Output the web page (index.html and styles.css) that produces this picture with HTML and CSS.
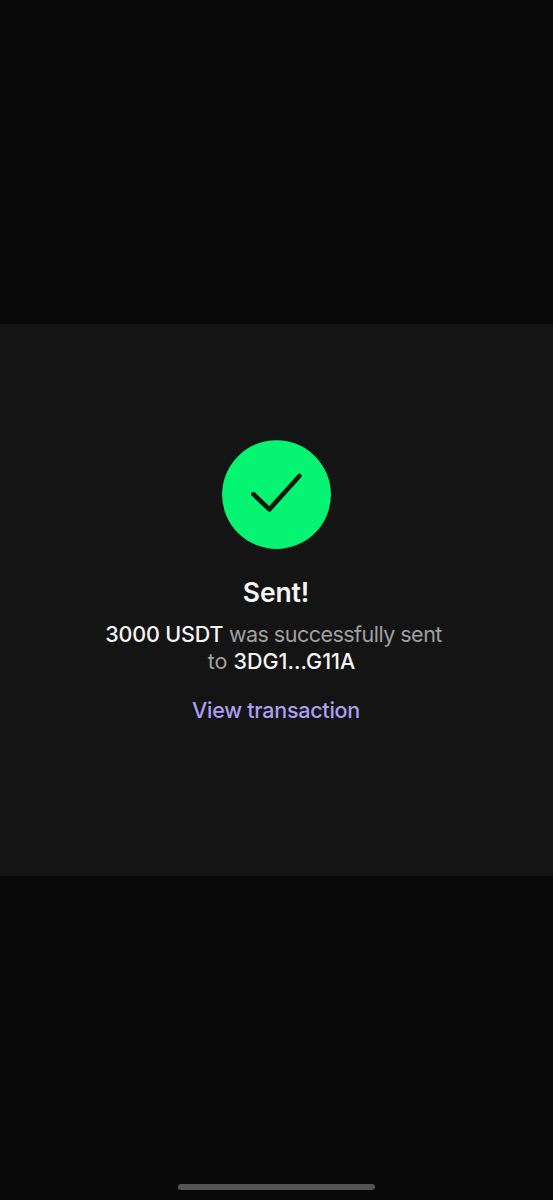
FILE: index.html
```html
<!DOCTYPE html>
<html lang="en">
<head>
<meta charset="utf-8">
<title>Sent</title>
<link rel="stylesheet" href="styles.css">
</head>
<body>
<main class="screen">
  <section class="panel">
    <svg class="success" viewBox="0 0 110 110" aria-hidden="true">
      <circle cx="54.5" cy="54.6" r="54.4" fill="#05f472"/>
      <path d="M31.4 54.2 L47.4 69.4 L77.4 36" fill="none" stroke="#07180c" stroke-width="4.6" stroke-linecap="round" stroke-linejoin="round"/>
    </svg>
    <h1 class="title">Sent!</h1>
    <p class="message"><span class="line line-first"><b>3000 USDT</b> was successfully sent</span><span class="line line-second">to <b>3DG1...G11A</b></span></p>
    <a class="link">View transaction</a>
  </section>
  <div class="home-indicator"></div>
</main>
</body>
</html>
```
FILE: styles.css
```css
* { box-sizing: border-box; margin: 0; }
body { background: #090909; font-family: Inter, "Liberation Sans", sans-serif; }
.screen { height: 1200px; padding-top: 324px; display: flex; flex-direction: column; align-items: center; overflow: hidden; }
.panel { width: 100%; height: 552px; padding-top: 116px; background: #141414; display: flex; flex-direction: column; align-items: center; }
.success { width: 110px; height: 110px; flex: none; }
.title { margin-top: 25px; padding-right: 1px; font-size: 26.5px; line-height: 34px; font-weight: 600; color: #f5f5f5; letter-spacing: -0.1px; }
.message { margin-top: 12px; font-size: 21.5px; line-height: 27px; color: #a0a0a0; text-align: center; white-space: nowrap; }
.line { display: block; }
.line-first { letter-spacing: -0.52px; padding-right: 6px; }
.line-second { padding-left: 10px; }
.message b { font-weight: 500; color: #f5f5f5; }
.line-first b { letter-spacing: -0.15px; }
.link { margin-top: 21px; padding-right: 1px; font-size: 21.5px; line-height: 28px; font-weight: 500; color: #ab9ff2; white-space: nowrap; letter-spacing: -0.25px; }
.home-indicator { width: 197px; height: 6px; margin-top: 308px; border-radius: 3px; background: #545454; }
```
